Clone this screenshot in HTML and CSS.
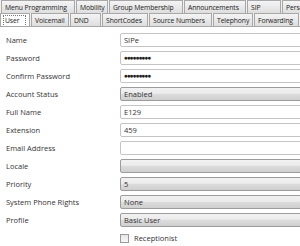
FILE: index.html
```html
<!DOCTYPE html>
<html>
<head>
    <meta charset="UTF-8">
    <title>User</title>
    <link rel="stylesheet" href="styles.css">
</head>
<body>
    <div class="tabs">
        <div class="tab-row back">
            <div class="tab" style="width:74px">Menu Programming</div>
            <div class="tab" style="width:32px">Mobility</div>
            <div class="tab" style="width:74px">Group Membership</div>
            <div class="tab" style="width:62px">Announcements</div>
            <div class="tab" style="width:34px">SIP</div>
            <div class="tab" style="width:40px">Personal</div>
        </div>
        <div class="tab-row front">
            <div class="tab active" style="width:30px"><span class="focus">User</span></div>
            <div class="tab" style="width:38px">Voicemail</div>
            <div class="tab" style="width:31px">DND</div>
            <div class="tab" style="width:46px">ShortCodes</div>
            <div class="tab" style="width:63px">Source Numbers</div>
            <div class="tab" style="width:40px">Telephony</div>
            <div class="tab" style="width:45px">Forwarding</div>
            <div class="tab" style="width:20px"></div>
        </div>
    </div>

    <div class="form">
        <div class="row"><label>Name</label><div class="field text">SIPe</div></div>
        <div class="row"><label>Password</label><div class="field text dots">●●●●●●●●●</div></div>
        <div class="row"><label>Confirm Password</label><div class="field text dots">●●●●●●●●●</div></div>
        <div class="row"><label>Account Status</label><div class="field combo">Enabled</div></div>
        <div class="row"><label>Full Name</label><div class="field text">E129</div></div>
        <div class="row"><label>Extension</label><div class="field text">459</div></div>
        <div class="row"><label>Email Address</label><div class="field text"></div></div>
        <div class="row"><label>Locale</label><div class="field combo"></div></div>
        <div class="row"><label>Priority</label><div class="field combo">5</div></div>
        <div class="row"><label>System Phone Rights</label><div class="field combo">None</div></div>
        <div class="row"><label>Profile</label><div class="field combo">Basic User</div></div>
        <div class="row"><label></label><div class="check"><span class="box"></span>Receptionist</div></div>
    </div>
</body>
</html>
```

FILE: styles.css
```css
* {
    margin: 0;
    padding: 0;
    box-sizing: border-box;
}

body {
    width: 300px;
    height: 246px;
    overflow: hidden;
    background: #ffffff;
    font-family: "Open Sans", sans-serif;
    font-size: 7.5px;
    color: #333333;
}

.tabs {
    background: #f0f0f0;
}

.tab-row {
    display: flex;
    white-space: nowrap;
    overflow: hidden;
    font-size: 6.8px;
    letter-spacing: -0.1px;
    color: #222222;
}

.tab-row.back {
    height: 13px;
    padding-left: 1px;
}

.tab-row.front {
    height: 14px;
    border-bottom: 1px solid #a8a8a8;
}

.tab {
    flex: none;
    background: linear-gradient(#f4f4f4, #dedede);
    border: 1px solid #a8a8a8;
    border-bottom: none;
    margin-right: 1px;
    padding: 1px 0 0 3px;
    line-height: 11px;
    overflow: hidden;
}

.tab.active {
    background: #ffffff;
    height: 15px;
    padding: 1px 3px 0 2px;
}

.focus {
    display: block;
    border: 1px dotted #777777;
    border-bottom: none;
    height: 12px;
    padding-left: 1px;
    line-height: 10px;
}

.form {
    padding: 6px 0 0 6px;
    display: flex;
    flex-direction: column;
    gap: 4px;
}

.row {
    display: flex;
    align-items: center;
    height: 14px;
}

.row label {
    width: 114px;
    flex: none;
}

.field {
    flex: none;
    width: 190px;
    height: 14px;
    padding-left: 3px;
    line-height: 12px;
    border: 1px solid #c4c4c4;
    border-radius: 2px;
}

.field.text {
    background: #ffffff;
}

.field.dots {
    font-size: 6.5px;
    letter-spacing: -1px;
    color: #222222;
}

.field.combo {
    border-color: #9c9c9c;
    background: linear-gradient(#f2f2f2 0%, #ebebeb 45%, #dcdcdc 50%, #cfcfcf 100%);
}

.check {
    display: flex;
    align-items: center;
    gap: 5px;
}

.box {
    width: 9px;
    height: 9px;
    border: 1px solid #9a9a9a;
    background: linear-gradient(#e6e6e6, #f8f8f8);
}
```
